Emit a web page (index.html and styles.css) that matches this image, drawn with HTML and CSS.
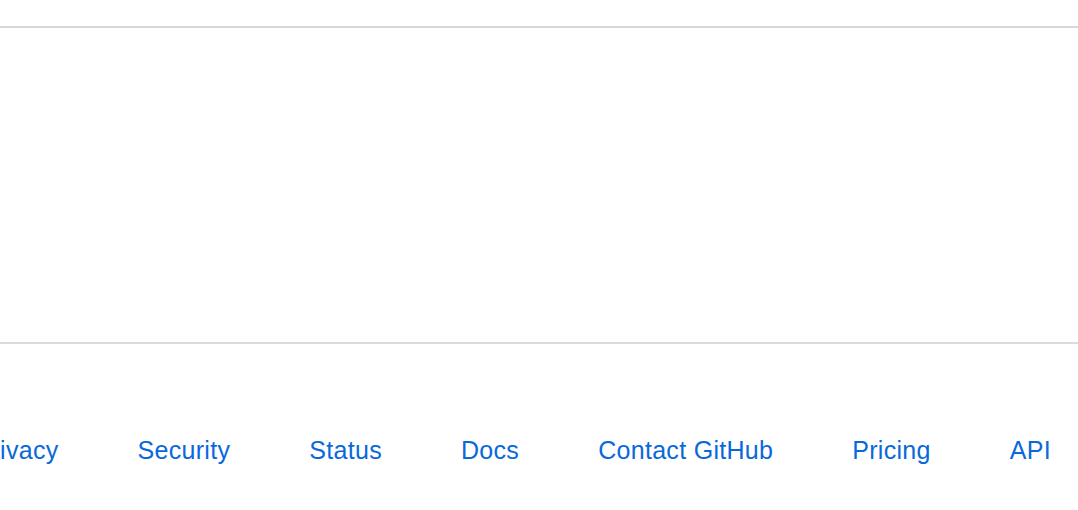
FILE: index.html
```html
<!DOCTYPE html>
<html lang="en">
<head>
<meta charset="utf-8">
<title>Footer</title>
<link rel="stylesheet" href="styles.css">
</head>
<body>
<div class="page">
  <div class="top-spacer"></div>
  <section class="content"></section>
  <footer class="footer">
    <ul class="footer-links">
      <li><a href="#">Privacy</a></li>
      <li><a href="#">Security</a></li>
      <li><a href="#">Status</a></li>
      <li><a href="#">Docs</a></li>
      <li><a href="#">Contact GitHub</a></li>
      <li><a href="#">Pricing</a></li>
      <li><a href="#">API</a></li>
    </ul>
  </footer>
</div>
</body>
</html>
```

FILE: styles.css
```css
html, body {
  margin: 0;
  padding: 0;
  background: #ffffff;
  overflow: hidden;
}

body {
  font-family: "Liberation Sans", Arial, sans-serif;
}

.page {
  width: 1078px;
  height: 510px;
  overflow: hidden;
}

.top-spacer {
  height: 26px;
}

.content {
  height: 314px;
  border-top: 2px solid #d3d8df;
  border-bottom: 2px solid #d8dce2;
}

.footer {
  padding-top: 91px;
}

.footer-links {
  list-style: none;
  margin: 0 0 0 -25.5px;
  padding: 0;
  display: flex;
  gap: 79px;
  white-space: nowrap;
}

.footer-links a {
  color: #0969da;
  text-decoration: none;
  font-size: 25px;
  line-height: 30px;
  letter-spacing: 0.3px;
}
```
